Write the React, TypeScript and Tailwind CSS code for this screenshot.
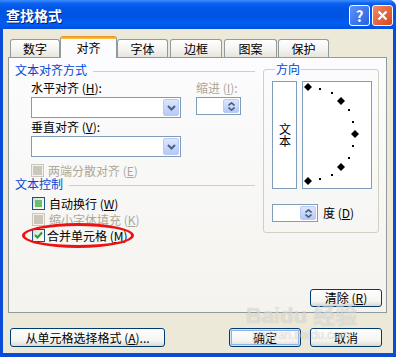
import React from 'react';

type Tri = 'off' | 'mixed' | 'on' | 'disabled';

const Chevron = () => (
  <svg width="9" height="6" viewBox="0 0 9 6">
    <polyline points="1,1 4.5,4.5 8,1" fill="none" stroke="#4d6185" strokeWidth="2" />
  </svg>
);

const Combo = () => (
  <div className="flex h-[21px] w-[150px] border border-[#7f9db9] bg-white p-[1px]">
    <div className="flex-1" />
    <div className="flex w-[16px] items-center justify-center rounded-[2px] border border-[#b9cbf3] bg-[linear-gradient(#dce6fd,#b6c9f6)]">
      <Chevron />
    </div>
  </div>
);

const Spin = ({ w }: { w: string }) => (
  <div className={`flex h-[18px] ${w} border border-[#7f9db9] bg-white p-[1px]`}>
    <div className="flex-1" />
    <div className="flex w-[16px] flex-col items-center justify-center gap-[1px] rounded-[2px] border border-[#b9cbf3] bg-[linear-gradient(#dce6fd,#b6c9f6)]">
      <svg width="7" height="4" viewBox="0 0 7 4">
        <polyline points="0.5,3.5 3.5,0.8 6.5,3.5" fill="none" stroke="#4d6185" strokeWidth="1.6" />
      </svg>
      <svg width="7" height="4" viewBox="0 0 7 4">
        <polyline points="0.5,0.5 3.5,3.2 6.5,0.5" fill="none" stroke="#4d6185" strokeWidth="1.6" />
      </svg>
    </div>
  </div>
);

const Check = ({ state }: { state: Tri }) => {
  if (state === 'disabled') {
    return (
      <div className="flex h-[13px] w-[13px] items-center justify-center border border-[#cac8bb] bg-[#f2f1ec]">
        <div className="h-[9px] w-[9px] bg-[#cbc8bb]" />
      </div>
    );
  }
  return (
    <div className="flex h-[13px] w-[13px] items-center justify-center border border-[#1c5180] bg-[linear-gradient(135deg,#dcdcd7,#ffffff)]">
      {state === 'mixed' && <div className="h-[7px] w-[7px] bg-[#6cc06c]" />}
      {state === 'on' && (
        <svg width="9" height="9" viewBox="0 0 9 9">
          <polyline points="1,4 3.5,6.5 8,1.5" fill="none" stroke="#21a121" strokeWidth="2" />
        </svg>
      )}
    </div>
  );
};

const Tab = ({ label, w, active, ml = '' }: { label: string; w: string; active?: boolean; ml?: string }) =>
  active ? (
    <div className={`relative z-10 flex h-[22px] ${w} ${ml} flex-col overflow-hidden rounded-t-[3px] border-x border-[#919b9c] bg-[#fcfcfe]`}>
      <div className="h-[3px] bg-[linear-gradient(#e68b2c,#ffc73c)]" />
      <div className="flex flex-1 items-center justify-center pb-[1px] text-[12px] leading-[14px]">{label}</div>
    </div>
  ) : (
    <div className={`mt-[3px] flex h-[18px] ${w} ${ml} items-center justify-center rounded-t-[3px] border-x border-t border-[#919b9c] bg-[linear-gradient(#ffffff,#f3f2ee_60%,#e6e4dc)] text-[12px] leading-[14px]`}>
      {label}
    </div>
  );

const XpButton = ({ children, w, h = 'h-[19px]', def }: { children: React.ReactNode; w: string; h?: string; def?: boolean }) => (
  <button
    type="button"
    className={`flex ${h} ${w} items-center justify-center rounded-[3px] border border-[#003c74] bg-[linear-gradient(#ffffff,#f4f4f0_70%,#dcd8cc)] text-[12px] leading-[14px] text-black ${
      def ? 'shadow-[inset_0_0_0_1px_#cee7ff,inset_0_0_0_2px_#8fb2ea]' : ''
    }`}
  >
    {children}
  </button>
);

const Header = ({ text }: { text: string }) => (
  <div className="flex h-[14px] items-center">
    <span className="text-[12px] leading-[14px] text-[#0046d5]">{text}</span>
    <div className="ml-[6px] mt-[3px] h-px flex-1 bg-[#d0d0bf]" />
  </div>
);

const Dial = () => {
  const big = [
    [6, 6],
    [39, 20],
    [53, 53],
    [39, 86],
    [6, 100],
  ];
  const small = [
    [18, 8],
    [30, 12],
    [47, 29],
    [51, 41],
    [51, 65],
    [47, 77],
    [30, 94],
    [18, 98],
  ];
  return (
    <div className="h-[108px] w-[70px] border border-[#7f9db9] bg-white">
      <svg width="68" height="106" viewBox="1 1 68 106">
        {big.map(([x, y], i) => (
          <polygon key={i} points={`${x},${y - 4} ${x + 4},${y} ${x},${y + 4} ${x - 4},${y}`} fill="#000" />
        ))}
        {small.map(([x, y], i) => (
          <rect key={i} x={x - 1} y={y - 1} width="2" height="2" fill="#000" />
        ))}
      </svg>
    </div>
  );
};

export default function App() {
  return (
    <div className="relative flex h-[357px] w-[399px] overflow-hidden bg-white font-['Noto_Sans_CJK_SC',sans-serif] text-black">
      <div className="flex h-full w-[396px] flex-col rounded-tr-[7px] bg-[#0a4cd8]">
        {/* title bar */}
        <div className="flex h-[29px] items-center rounded-tr-[7px] bg-[linear-gradient(#3d8cff_0%,#0a62f0_12%,#0055e5_30%,#0054e3_60%,#005ef5_80%,#0050dc_100%)] pl-[6px] pr-[3px] pt-[1px]">
          <span className="flex-1 text-[14px] font-bold leading-[16px] text-white [text-shadow:1px_1px_0_#0a1f6e]">查找格式</span>
          <div className="flex h-[21px] w-[21px] items-center justify-center rounded-[3px] border border-white bg-[linear-gradient(135deg,#5f93f7,#2660e2)] text-[15px] font-bold leading-none text-white">
            ?
          </div>
          <div className="ml-[2px] flex h-[21px] w-[21px] items-center justify-center rounded-[3px] border border-white bg-[linear-gradient(135deg,#ec8a6a,#d9461d)]">
            <svg width="11" height="11" viewBox="0 0 11 11">
              <path d="M1.5 1.5 L9.5 9.5 M9.5 1.5 L1.5 9.5" stroke="#fff" strokeWidth="2.2" />
            </svg>
          </div>
        </div>

        {/* body */}
        <div className="mx-[3px] mb-[4px] flex flex-1 flex-col bg-[#ece9d8] pl-[5px] pr-[6px] pt-[7px]">
          <div className="ml-[2px] flex h-[21px] items-start">
            <Tab label="数字" w="w-[50px]" />
            <Tab label="对齐" w="w-[57px]" active />
            <Tab label="字体" w="w-[51px]" />
            <Tab label="边框" w="w-[52px]" ml="ml-[2px]" />
            <Tab label="图案" w="w-[53px]" ml="ml-[2px]" />
            <Tab label="保护" w="w-[51px]" ml="ml-[1px]" />
          </div>

          <div className="flex h-[256px] flex-col border border-[#919b9c] bg-[linear-gradient(#fcfcfe,#f4f3ee)] pl-[6px] pr-[4px] pt-[5px] text-[12px] leading-[14px]">
            <div className="flex items-start">
              {/* left column */}
              <div className="flex w-[240px] flex-col">
                <Header text="文本对齐方式" />
                <div className="ml-[16px] mt-[4px] flex">
                  <div className="flex w-[150px] flex-col">
                    <span className="h-[14px]">
                      水平对齐 (<u>H</u>):
                    </span>
                    <div className="mt-[2px]">
                      <Combo />
                    </div>
                    <span className="mt-[2px] h-[14px]">
                      垂直对齐 (<u>V</u>):
                    </span>
                    <div className="mt-[2px]">
                      <Combo />
                    </div>
                  </div>
                  <div className="ml-[15px] flex flex-col">
                    <span className="h-[14px] text-[#aca899]">
                      缩进 (<u>I</u>):
                    </span>
                    <div className="mt-[2px]">
                      <Spin w="w-[45px]" />
                    </div>
                  </div>
                </div>
                <div className="ml-[16px] mt-[7px] flex h-[13px] items-center gap-[4px] text-[#aca899]">
                  <Check state="disabled" />
                  <span>
                    两端分散对齐 (<u>E</u>)
                  </span>
                </div>
                <Header text="文本控制" />
                <div className="ml-[17px] mt-[6px] flex flex-col gap-[3px]">
                  <div className="flex h-[13px] items-center gap-[4px]">
                    <Check state="mixed" />
                    <span>
                      自动换行 (<u>W</u>)
                    </span>
                  </div>
                  <div className="flex h-[13px] items-center gap-[4px] text-[#aca899]">
                    <Check state="disabled" />
                    <span>
                      缩小字体填充 (<u>K</u>)
                    </span>
                  </div>
                  <div className="relative flex h-[13px] items-center gap-[2px]">
                    <Check state="on" />
                    <span>
                      合并单元格 (<u>M</u>)
                    </span>
                    <div className="absolute left-[-10px] top-[-6px] h-[25px] w-[112px] rounded-[50%] border-[3px] border-[#ee1111]" />
                  </div>
                </div>
              </div>

              {/* orientation group */}
              <fieldset className="ml-[8px] mt-[-1px] w-[116px] rounded-[3px] border border-[#d0d0bf] pb-[10px] pl-[8px]">
                <legend className="ml-[3px] px-[1px] text-[12px] leading-[14px] text-[#0046d5]">方向</legend>
                <div className="mt-[5px] flex gap-[5px]">
                  <div className="flex h-[108px] w-[25px] items-center justify-center border border-[#7f9db9] bg-white">
                    <span className="leading-[14px] [writing-mode:vertical-rl]">文本</span>
                  </div>
                  <Dial />
                </div>
                <div className="mt-[15px] flex items-center gap-[5px]">
                  <Spin w="w-[46px]" />
                  <span>
                    度 (<u>D</u>)
                  </span>
                </div>
              </fieldset>
            </div>
            <div className="flex-1" />
            <div className="mb-[5px] flex justify-end">
              <XpButton w="w-[72px]" h="h-[18px]">
                清除 (<u>R</u>)
              </XpButton>
            </div>
          </div>

          <div className="ml-[2px] mr-[5px] mt-[15px] flex items-center">
            <XpButton w="w-[155px]">
              从单元格选择格式 (<u>A</u>)...
            </XpButton>
            <div className="flex-1" />
            <XpButton w="w-[72px]" def>
              确定
            </XpButton>
            <div className="w-[9px]" />
            <XpButton w="w-[72px]">取消</XpButton>
          </div>
        </div>
      </div>
      <div className="w-[3px] bg-white" />

      {/* watermark */}
      <div className="pointer-events-none absolute left-[246px] top-[304px] flex flex-col items-center text-white/45 [text-shadow:0_0_1px_rgba(110,110,110,0.35)]">
        <span className="font-['Liberation_Sans','Noto_Sans_CJK_SC',sans-serif] text-[22px] font-bold leading-[24px]">Baidu 经验</span>
        <span className="font-['Liberation_Sans',sans-serif] text-[12px] leading-[14px]">jingyan.baidu.com</span>
      </div>
    </div>
  );
}
